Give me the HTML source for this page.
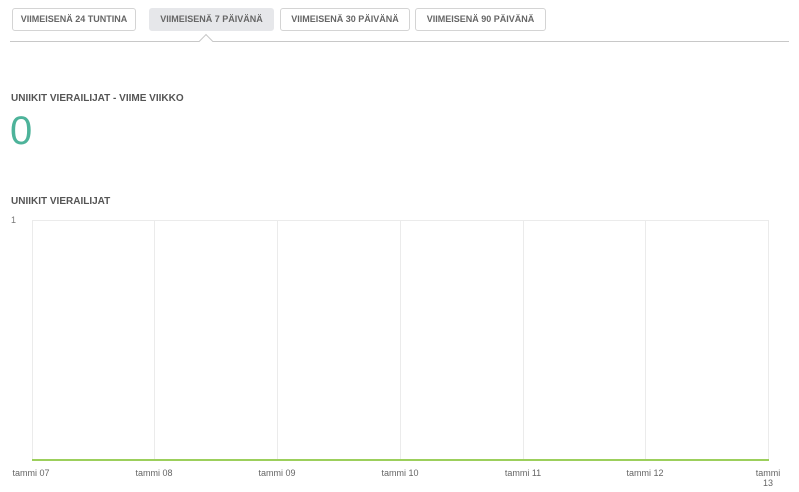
<!DOCTYPE html>
<html><head><meta charset="utf-8"><style>
body{margin:0;width:799px;height:492px;background:#fff;font-family:"Liberation Sans",sans-serif;position:relative;overflow:hidden}
.b{position:absolute;top:8px;height:23px;box-sizing:border-box;border:1px solid #d4d4d4;border-radius:3px;background:#fff;font-size:9px;font-weight:bold;color:#666;line-height:21px;text-align:center}
.b.a{background:#e6e7ea;border-color:#e6e7ea}
.hl{position:absolute;left:10px;top:41px;width:779px;height:1px;background:#c8c8c8}
.car{position:absolute;left:201px;top:36px;width:9px;height:9px;background:#fff;border-left:1px solid #c8c8c8;border-top:1px solid #c8c8c8;transform:rotate(45deg)}
.h{position:absolute;left:11px;font-size:10px;font-weight:bold;color:#555}
.v{position:absolute;background:#ebebeb;width:1px;top:220px;height:240px}
.t{position:absolute;top:468px;font-size:9px;color:#666;width:50px;text-align:center;line-height:10px}
</style></head><body>
<div class="b" style="left:12px;width:124px">VIIMEISENÄ 24 TUNTINA</div>
<div class="b a" style="left:149px;width:125px">VIIMEISENÄ 7 PÄIVÄNÄ</div>
<div class="b" style="left:280px;width:130px">VIIMEISENÄ 30 PÄIVÄNÄ</div>
<div class="b" style="left:415px;width:131px">VIIMEISENÄ 90 PÄIVÄNÄ</div>
<div class="hl"></div><div class="car"></div>
<div class="h" style="top:93px">UNIIKIT VIERAILIJAT - VIIME VIIKKO</div>
<div style="position:absolute;left:10px;top:108px;font-size:40px;color:#4db39a;line-height:46px">0</div>
<div class="h" style="top:196px">UNIIKIT VIERAILIJAT</div>
<div style="position:absolute;left:11px;top:215px;font-size:9px;color:#777">1</div>
<div style="position:absolute;left:32px;top:220px;width:736px;height:1px;background:#ebebeb"></div>
<div class="v" style="left:32px"></div><div class="v" style="left:154px"></div><div class="v" style="left:277px"></div><div class="v" style="left:400px"></div><div class="v" style="left:523px"></div><div class="v" style="left:645px"></div><div class="v" style="left:768px"></div>
<div style="position:absolute;left:32px;top:459px;width:737px;height:2px;background:#9ccf5c"></div>
<div class="t" style="left:6px">tammi 07</div>
<div class="t" style="left:129px">tammi 08</div>
<div class="t" style="left:252px">tammi 09</div>
<div class="t" style="left:375px">tammi 10</div>
<div class="t" style="left:498px">tammi 11</div>
<div class="t" style="left:620px">tammi 12</div>
<div class="t" style="left:743px">tammi<br>13</div>
</body></html>
